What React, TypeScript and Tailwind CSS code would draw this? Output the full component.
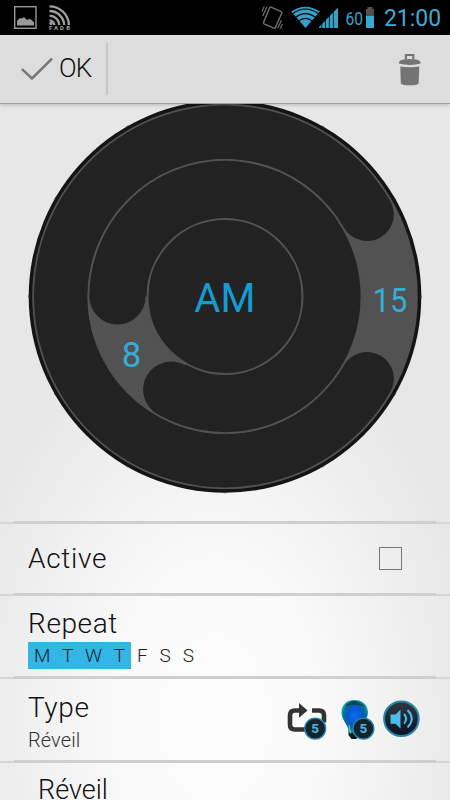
import * as React from 'react'

const days = ['M', 'T', 'W', 'T', 'F', 'S', 'S']

function StatusBar() {
  return (
    <header className="flex h-[35px] shrink-0 items-start justify-between bg-black">
      <svg width="80" height="35" fill="none">
        <rect x="14.7" y="6.7" width="21.3" height="21.6" stroke="#999" strokeWidth="1.4" />
        <path d="M17 25.5v-4.5l3-3 2 .5 2-1.5 3 3 2-1 2 .5 3 3v3z" fill="#999" />
        <g stroke="#a0a0a0" strokeWidth="2.3">
          <path d="M49.5 6.3A19.5 19.5 0 0 1 69 25" />
          <path d="M49.5 11A14.7 14.7 0 0 1 64.2 25" />
          <path d="M49.5 15.7A10 10 0 0 1 59.3 25" />
          <path d="M49.5 20.3A5 5 0 0 1 54.3 25" />
        </g>
        <circle cx="51" cy="23.5" r="1.7" fill="#a0a0a0" />
        <text x="49" y="30" textLength="21" fontSize="6" fontWeight="700" fontFamily="Roboto, sans-serif" fill="#a0a0a0" stroke="#000" strokeWidth="1" paintOrder="stroke">
          FADB
        </text>
      </svg>
      <svg width="190" height="35" viewBox="260 0 190 35" fill="none">
        <g stroke="#707070" strokeWidth="1.4">
          <path d="M271 7.2l10.3 4.4q.9.5.5 1.4l-6.3 14.4q-.5 1.2-1.6.8l-9.8-4.4q-.9-.5-.5-1.5l6-14.3q.4-1.1 1.4-.8z" />
          <path d="M266.8 7l-4 9M264.3 6.5l-2.3 5M277.8 28.2l3.6-8M280.4 28.4l2-4.4" strokeWidth="1.2" />
        </g>
        <path d="M305.5 28L291.3 11.5Q305.5 1.8 319.8 11.5z" fill="#36a0c8" />
        <g stroke="#000" strokeWidth="1.2">
          <path d="M292.5 13.7q13-9.4 26 0" />
          <path d="M295.2 17.6q10.3-8 20.6 0" />
          <path d="M298.2 21.4q7.3-6 14.6 0" />
        </g>
        <path d="M319 28V27L338 7.5V28z" fill="#36a0c8" />
        <path d="M321.7 5v24M325.5 5v24M329.4 5v24M333.4 5v24" stroke="#000" strokeWidth=".8" />
        <text x="345.5" y="24.5" fontSize="17.5" textLength="17.5" lengthAdjust="spacingAndGlyphs" fontFamily="Roboto, sans-serif" fill="#36a0c8">60</text>
        <path d="M367.5 9V7h5v2h1.5v8h-8V9z" fill="#505050" />
        <rect x="366" y="16" width="8" height="12" fill="#36a9d4" />
        <text x="384" y="26.3" fontSize="24" textLength="57" lengthAdjust="spacingAndGlyphs" fontFamily="Roboto, sans-serif" fill="#41aad3">21:00</text>
      </svg>
    </header>
  )
}

function ActionBar() {
  return (
    <div className="z-10 flex h-[68.5px] shrink-0 items-center justify-between border-b border-[#a0a0a0] bg-[#dddddd] shadow-[0_1px_4px_rgba(0,0,0,0.2)]">
      <button className="flex h-[52px] w-[108px] items-center border-r-2 border-[#c8c8c8] pl-[21px]">
        <svg width="32" height="24" fill="none" stroke="#777" strokeWidth="2.5">
          <path d="M1 12.2l10 9.3L31 1.6" />
        </svg>
        <span className="ml-[6px] pb-px text-[26px] leading-none font-light tracking-[-0.8px] text-[#111]">OK</span>
      </button>
      <button className="mr-[28px]">
        <svg width="24" height="34" fill="#747474">
          <path d="M6.8 7V2h9.6v5h-2.2V4H9v3z" />
          <path d="M1 11.6v-1.4Q2 6.9 11.7 6.9t10.8 3.3v1.4Q18 13 11.8 13T1 11.6z" />
          <path d="M2.3 14.5q9.5 1.6 19 0l-.6 16.2q-.2 2.6-8.9 2.6t-9-2.6z" />
        </svg>
      </button>
    </div>
  )
}

// each ring is a grey band with a round-capped dark track laid over it
function TimeDial() {
  return (
    <svg className="block shrink-0" width="450" height="417.5" viewBox="0 103.5 450 417.5" fill="none">
      <circle cx="225" cy="296" r="196.3" fill="#141414" />
      <circle cx="225" cy="296" r="196.2" stroke="#444" strokeWidth="1" strokeDasharray="3 99.73" strokeDashoffset="1.5" />
      <circle cx="225" cy="296" r="192.8" fill="#525252" />
      <path d="M367.1 378.2A164.2 164.2 0 1 1 367.1 213.8" stroke="#222" strokeWidth="53.4" strokeLinecap="round" />
      <circle cx="225" cy="296" r="136" fill="#222" stroke="#525252" strokeWidth="2.6" />
      <path d="M88 296A137 137 0 0 0 156.5 414.6L186 363.5A78 78 0 0 1 147 296z" fill="#525252" />
      <path d="M117.5 296A107.5 107.5 0 1 1 171.25 389.1" stroke="#222" strokeWidth="56.2" strokeLinecap="round" />
      <circle cx="225" cy="296" r="77.5" fill="#222" stroke="#525252" strokeWidth="2" />
      <g fontFamily="Roboto, sans-serif" textAnchor="middle">
        <text x="224.8" y="311.4" fontSize="40" textLength="61" lengthAdjust="spacingAndGlyphs" fill="#159bd0">AM</text>
        <text x="131.5" y="366" fontSize="35" textLength="19.5" lengthAdjust="spacingAndGlyphs" fill="#36add9">8</text>
        <text x="390" y="311.5" fontSize="33" textLength="34.5" lengthAdjust="spacingAndGlyphs" fill="#36add9">15</text>
      </g>
    </svg>
  )
}

function Divider() {
  return (
    <div className="flex h-[3px] shrink-0 items-center">
      <div className="h-[2px] w-[14px] bg-[#d6d6d6]" />
      <div className="h-[3px] flex-1 bg-[#cfcfcf]" />
      <div className="h-[2px] w-[14px] bg-[#d6d6d6]" />
    </div>
  )
}

function Badge({ x, y }: { x: number; y: number }) {
  return (
    <g>
      <circle cx={x} cy={y} r="10.5" fill="#15242c" stroke="#2189b0" strokeWidth="1.3" />
      <text x={x} y={y + 4.7} textAnchor="middle" fontSize="13.5" fontWeight="700" fontFamily="Roboto, sans-serif" fill="#4bb9e6">5</text>
    </g>
  )
}

function TypeIcons() {
  return (
    <svg width="135" height="42" viewBox="286 698 135 42" fill="none">
      <defs>
        <radialGradient id="bulb" cx="50%" cy="48%" r="55%">
          <stop offset="0" stopColor="#0a6cf0" />
          <stop offset=".5" stopColor="#0757d0" />
          <stop offset=".75" stopColor="#08708c" />
          <stop offset="1" stopColor="#16bacb" />
        </radialGradient>
        <linearGradient id="speaker" x2="0" y2="1">
          <stop offset="0" stopColor="#303840" />
          <stop offset="1" stopColor="#071225" />
        </linearGradient>
      </defs>
      <path d="M299 710.5h-4q-5 0-5 5v9q0 5 5 5h15M312 710.5h7q5 0 5 5v7" stroke="#333" strokeWidth="4.6" />
      <path d="M299 703l8.5 7.5-8.5 7.3z" fill="#333" />
      <Badge x={315.2} y={728.6} />
      <path d="M348.5 730h10v5l-2 4h-5l-3-4z" fill="#171717" />
      <path d="M341.5 712.5C341.5 704.5 347 700 354.5 700S368 704.5 368 712.5C368 720 361 724 360 732.5H349C348 724 341.5 720 341.5 712.5z" fill="url(#bulb)" />
      <path d="M345 706.5Q350 700.5 354.5 701T365 706.5Q354.5 702.8 345 706.5z" fill="#074450" />
      <path d="M349 725l1.5 8.5M353.5 726v8" stroke="#57d0e4" strokeWidth="1" />
      <Badge x={363.4} y={728.6} />
      <circle cx="401.4" cy="718.7" r="17.3" fill="url(#speaker)" stroke="#2487a8" strokeWidth="2" />
      <path d="M390.5 714.5h5l5-5v19l-5-4.7h-5z" fill="#4ebae8" />
      <path d="M404 714q4.3 4.8 0 9.6M407.5 710q8.5 8.7 0 17.4" stroke="#4ebae8" strokeWidth="2" />
    </svg>
  )
}

export default function App() {
  return (
    <main className="flex h-[800px] w-[450px] flex-col overflow-hidden bg-[#e7e7e7] bg-[radial-gradient(ellipse_260px_400px_at_48%_720px,#fdfdfd_0%,#fafafa_35%,#f1f1f1_70%,#e7e7e7_100%)] font-['Roboto',sans-serif] text-[#111]">
      <StatusBar />
      <ActionBar />
      <TimeDial />
      <Divider />
      <section className="flex h-[69px] shrink-0 items-center justify-between pr-[48px] pl-[28px]">
        <h2 className="text-[28px] leading-none font-light tracking-[0.7px]">Active</h2>
        <div className="h-[23px] w-[23px] border border-[#777]" />
      </section>
      <Divider />
      <section className="h-[80px] shrink-0 pt-[12px] pl-[28px]">
        <h2 className="text-[28px] leading-[32px] font-light tracking-[0.6px]">Repeat</h2>
        <div className="mt-[2px] flex h-[27px] text-[19px] leading-[29px] font-light text-[#222]">
          <div className="flex w-[103px] items-center justify-between bg-[#33b5e5] pr-[6px] pl-[6px]">
            {days.slice(0, 4).map((day, i) => (
              <span key={i}>{day}</span>
            ))}
          </div>
          <div className="ml-[6px] flex w-[57px] items-center justify-between">
            {days.slice(4).map((day, i) => (
              <span key={i}>{day}</span>
            ))}
          </div>
        </div>
      </section>
      <Divider />
      <section className="flex h-[81px] shrink-0 justify-between pr-[29px] pl-[28px]">
        <div className="pt-[13px]">
          <h2 className="text-[28px] leading-[32px] font-light tracking-[0.6px]">Type</h2>
          <p className="mt-[4px] text-[20px] leading-[24px] font-light tracking-[0.1px] text-[#333]">Réveil</p>
        </div>
        <div className="mt-[19px]">
          <TypeIcons />
        </div>
      </section>
      <Divider />
      <section className="h-[37px] pt-[11px] pl-[38px]">
        <h2 className="text-[27px] leading-[32px] font-light">Réveil</h2>
      </section>
    </main>
  )
}
